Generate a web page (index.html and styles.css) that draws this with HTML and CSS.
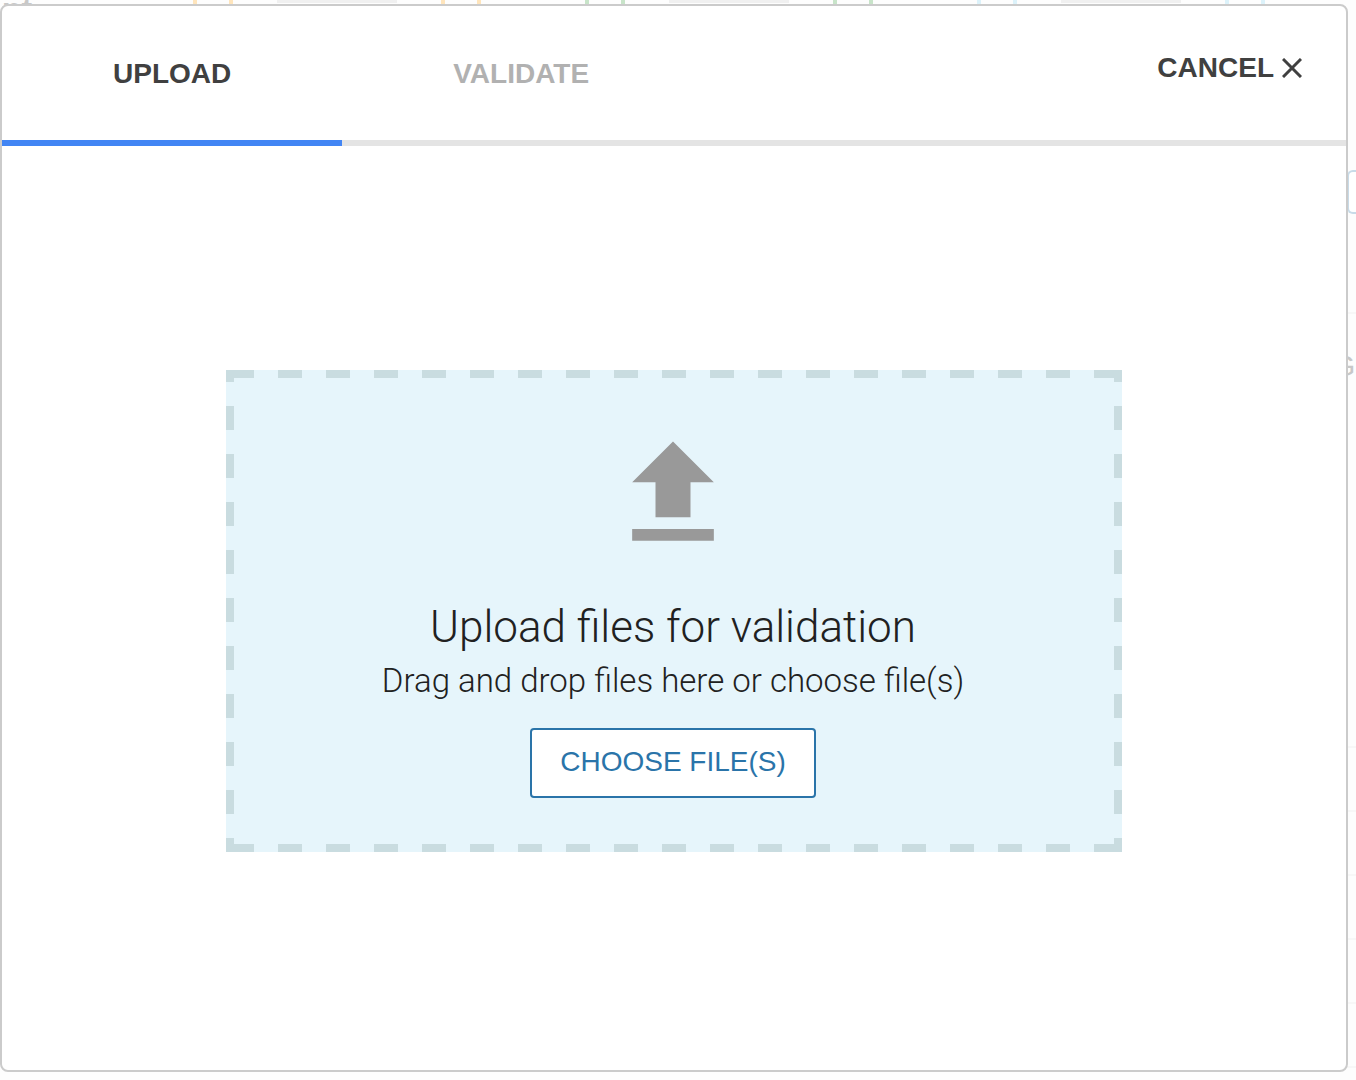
FILE: index.html
```html
<!DOCTYPE html>
<html lang="en">
<head>
<meta charset="utf-8">
<meta name="viewport" content="width=device-width, initial-scale=1">
<title>Upload files for validation</title>
<link rel="stylesheet" href="styles.css">
</head>
<body>
<div class="backdrop" aria-hidden="true">
  <div class="strip">
    <span class="strip-label">nt</span>
    <div class="groups">
      <div class="group orange"><i></i><i></i><b></b><i></i><i></i></div>
      <div class="group green"><i></i><i></i><b></b><i></i><i></i></div>
      <div class="group blue"><i></i><i></i><b></b><i></i><i></i></div>
    </div>
  </div>
  <div class="side">
    <div class="side-box"></div>
    <div class="side-head">G</div>
    <div class="side-row"></div>
    <div class="side-row"></div>
    <div class="side-row"></div>
    <div class="side-row"></div>
    <div class="side-row"></div>
    <div class="side-row"></div>
  </div>
</div>
<main class="modal" role="dialog" aria-label="Upload">
  <header class="header">
    <nav class="tabs">
      <button class="tab active" type="button">UPLOAD</button>
      <button class="tab" type="button">VALIDATE</button>
    </nav>
    <button class="cancel" type="button">CANCEL
      <svg class="close" viewBox="0 0 20 20" aria-hidden="true"><path d="M1 1 19 19M19 1 1 19"/></svg>
    </button>
  </header>
  <section class="content">
    <div class="dropzone">
      <svg class="upload-icon" viewBox="0 0 24 24" aria-hidden="true"><path d="M9 16h6v-6h4l-7-7-7 7h4zM5 18h14v2H5z"/></svg>
      <h1 class="title">Upload files for validation</h1>
      <p class="hint">Drag and drop files here or choose file(s)</p>
      <button class="choose" type="button">CHOOSE FILE(S)</button>
    </div>
  </section>
</main>
</body>
</html>
```
FILE: styles.css
```css
* { box-sizing: border-box; }

body {
  margin: 0;
  background: #fdfdfd;
  color: #212121;
  font-family: "Liberation Sans", Arial, sans-serif;
  font-size: 28px;
}

button {
  border: 0;
  background: none;
  color: inherit;
  font: inherit;
  cursor: pointer;
}

/* Faded page behind the dialog */
.backdrop {
  position: absolute;
  inset: 0;
  overflow: hidden;
  color: #c8c8c8;
}
.strip {
  display: flex;
  height: 24px;
  padding-left: 2px;
}
.strip-label {
  width: 191px;
  margin-top: -9px;
  font-size: 32px;
  font-weight: bold;
  line-height: 36px;
}
.groups { display: flex; gap: 104px; }
.group { display: flex; gap: 32px; }
.group i { width: 4px; background: currentColor; }
.group b { width: 120px; height: 3px; margin: 0 12px; background: #f0f0f0; }
.orange { color: #ffe5bc; }
.green { color: #c8e4c9; }
.blue { color: #dcf2fa; }

.side {
  width: 24px;
  margin-left: auto;
  padding-top: 146px;
}
.side-box {
  height: 44px;
  margin-left: 15px;
  border: 2px solid #c8dbe8;
  border-right: 0;
  border-radius: 6px 0 0 6px;
  background: #ffffff;
}
.side-head {
  height: 434px;
  margin-top: 98px;
  padding-top: 36px;
  border-top: 2px solid #f7f7f7;
  font-size: 30px;
  line-height: 32px;
}
.side-row {
  height: 64px;
  border-top: 2px solid #f7f7f7;
}

/* Dialog */
.modal {
  position: relative;
  display: flex;
  flex-direction: column;
  min-height: calc(100vh - 12px);
  margin: 4px 8px 8px 0;
  border: 2px solid #cbcbcb;
  border-radius: 8px;
  background: #ffffff;
}
.header {
  display: flex;
  justify-content: space-between;
  align-items: flex-start;
  box-shadow: inset 0 -6px #e4e4e4;
  color: #404040;
  font-weight: bold;
}
.tabs { display: flex; }
.tab {
  height: 140px;
  padding: 0 111px 4px;
  color: #b1b1b1;
}
.tab.active {
  box-shadow: inset 0 -6px #4285f4;
  color: #404040;
}
.cancel {
  display: flex;
  align-items: center;
  gap: 8px;
  margin: 46px 44px 0 0;
  padding: 0;
  line-height: 32px;
}
.close {
  width: 20px;
  height: 20px;
  fill: none;
  stroke: currentColor;
  stroke-width: 3;
}

.content {
  display: flex;
  flex: 1;
  flex-direction: column;
  align-items: center;
  padding: 224px 0 48px;
}
.dropzone {
  --dash: #c9dce0;
  display: flex;
  flex-direction: column;
  align-items: center;
  width: 66.6667%;
  padding: 54px 18px 54px 16px;
  text-align: center;
  background:
    repeating-linear-gradient(90deg, var(--dash) 0 24px, transparent 24px 48px) 4px 0 / 48px 8px repeat-x,
    repeating-linear-gradient(90deg, var(--dash) 0 24px, transparent 24px 48px) 4px 100% / 48px 8px repeat-x,
    repeating-linear-gradient(var(--dash) 0 24px, transparent 24px 48px) 0 36px / 8px 48px repeat-y,
    repeating-linear-gradient(var(--dash) 0 24px, transparent 24px 48px) 100% 36px / 8px 48px repeat-y,
    #e6f5fb;
}
.upload-icon {
  width: 140px;
  height: 140px;
  fill: #999999;
}
.title, .hint {
  margin: 0;
  font-family: Roboto, "Liberation Sans", sans-serif;
  font-weight: 300;
}
.title {
  margin-top: 37px;
  font-size: 44px;
  line-height: 52px;
}
.hint {
  margin-top: 8px;
  font-size: 33px;
  line-height: 40px;
}
.choose {
  height: 70px;
  margin-top: 27px;
  padding: 0 28px 2px;
  border: 2px solid #2a74a9;
  border-radius: 4px;
  background: #ffffff;
  color: #2a74a9;
}
```
